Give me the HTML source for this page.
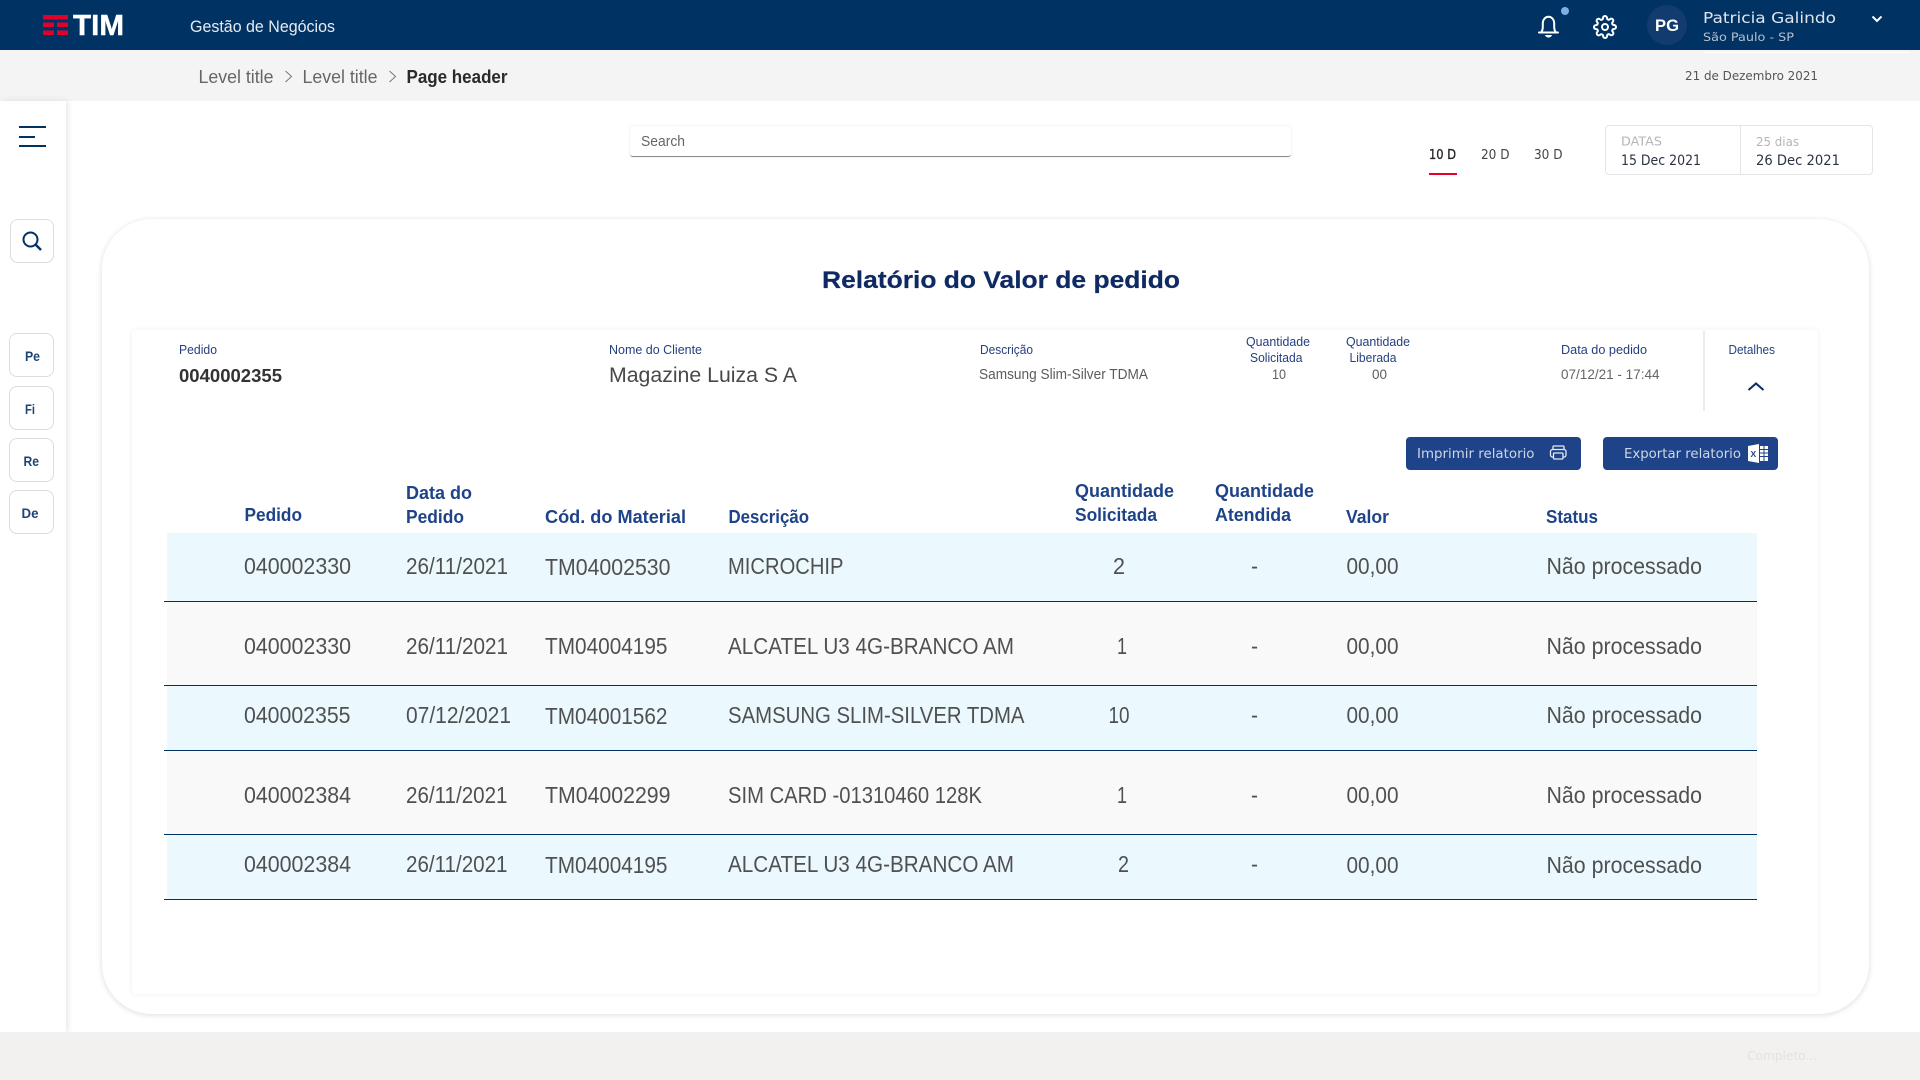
<!DOCTYPE html>
<html lang="pt-BR">
<head>
<meta charset="utf-8">
<title>Relatório do Valor de pedido</title>
<style>
html,body{margin:0;padding:0;width:1920px;height:1080px;overflow:hidden;background:#fff;font-family:"Liberation Sans",sans-serif}
.b{position:absolute;box-sizing:border-box}
svg{position:absolute;left:0;top:0}
text{font-family:"Liberation Sans",sans-serif;white-space:pre}
.td{font-size:23.5px;fill:#505050}
.th{font-size:18.5px;font-weight:700;fill:#1e4388}
.lb{font-size:13px;fill:#25407f}
.m{font-family:"DejaVu Sans",sans-serif}
</style>
</head>
<body>
<div class="b" style="left:0;top:0;width:1920px;height:50px;background:#013264"></div>
<div class="b" style="left:0;top:50px;width:1920px;height:51px;background:#f4f4f4"></div>
<div class="b" style="left:1703px;top:52px;width:207px;height:1px;background:#fff"></div>
<div class="b" style="left:0;top:101px;width:66px;height:931px;background:#fff;box-shadow:2px 0 6px rgba(0,0,0,.1)"></div>
<div class="b" style="left:0;top:1032px;width:1920px;height:48px;background:#f2f1ef"></div>

<div class="b" style="left:10px;top:219px;width:44px;height:44px;border:1px solid #ddd;border-radius:8px;background:#fff"></div>
<div class="b" style="left:9px;top:333px;width:45px;height:44px;border:1px solid #ddd;border-radius:8px;background:#fff"></div>
<div class="b" style="left:9px;top:386px;width:45px;height:44px;border:1px solid #ddd;border-radius:8px;background:#fff"></div>
<div class="b" style="left:9px;top:438px;width:45px;height:44px;border:1px solid #ddd;border-radius:8px;background:#fff"></div>
<div class="b" style="left:9px;top:490px;width:45px;height:44px;border:1px solid #ddd;border-radius:8px;background:#fff"></div>

<div class="b" style="left:630px;top:126px;width:661px;height:31px;background:#fff;border-bottom:1px solid #8a8a8a;border-radius:3px;box-shadow:0 0 2px rgba(0,0,0,.12)"></div>
<div class="b" style="left:1605px;top:125px;width:268px;height:50px;border:1px solid #e4e4e4;border-radius:4px;background:#fff"></div>
<div class="b" style="left:1740px;top:125px;width:1px;height:50px;background:#e4e4e4"></div>
<div class="b" style="left:1429px;top:173px;width:28px;height:2px;background:#e4002b"></div>

<div class="b" style="left:102px;top:219px;width:1767px;height:795px;background:#fff;border-radius:50px;box-shadow:0 1px 6px rgba(0,0,0,.14)"></div>
<div class="b" style="left:132px;top:330px;width:1686px;height:664px;background:#fff;border-radius:4px;box-shadow:0 0 6px rgba(0,0,0,.07)"></div>
<div class="b" style="left:1703px;top:331px;width:2px;height:80px;background:#ececec"></div>

<div class="b" style="left:1406px;top:437px;width:175px;height:33px;background:#1e4388;border-radius:4px"></div>
<div class="b" style="left:1603px;top:437px;width:175px;height:33px;background:#1e4388;border-radius:4px"></div>

<div class="b" style="left:167px;top:533px;width:1590px;height:68px;background:#ebf9ff"></div>
<div class="b" style="left:167px;top:601px;width:1590px;height:84px;background:#f9f9f9"></div>
<div class="b" style="left:167px;top:685px;width:1590px;height:65px;background:#ebf9ff"></div>
<div class="b" style="left:167px;top:750px;width:1590px;height:84px;background:#f9f9f9"></div>
<div class="b" style="left:167px;top:834px;width:1590px;height:65px;background:#ebf9ff"></div>
<div class="b" style="left:164px;top:601px;width:1593px;height:1px;background:#013264"></div>
<div class="b" style="left:164px;top:685px;width:1593px;height:1px;background:#013264"></div>
<div class="b" style="left:164px;top:750px;width:1593px;height:1px;background:#013264"></div>
<div class="b" style="left:164px;top:834px;width:1593px;height:1px;background:#013264"></div>
<div class="b" style="left:164px;top:899px;width:1593px;height:1px;background:#013264"></div>

<svg width="1920" height="1080" viewBox="0 0 1920 1080" xmlns="http://www.w3.org/2000/svg">
<!-- logo -->
<rect x="43" y="15" width="25" height="4.5" fill="#e4002b"/>
<rect x="43" y="22.5" width="11" height="4.5" fill="#e4002b"/><rect x="57" y="22.5" width="11" height="4.5" fill="#e4002b"/>
<rect x="43" y="30.5" width="11" height="4.5" fill="#e4002b"/><rect x="57" y="30.5" width="11" height="4.5" fill="#e4002b"/>
<text x="73" y="35" font-size="29" font-weight="700" fill="#fff" stroke="#fff" stroke-width=".4" textLength="51" lengthAdjust="spacingAndGlyphs">TIM</text>
<text x="190" y="32" font-size="16.5" fill="#e6ebf1" textLength="145" lengthAdjust="spacingAndGlyphs">Gestão de Negócios</text>

<!-- bell -->
<g fill="none" stroke="#fff" stroke-width="2" stroke-linecap="round" stroke-linejoin="round">
<path d="M1539 32.5h19M1541 32.5c1.3-1.6 1.8-3.2 1.8-5.5v-3.5c0-4 2.6-6.7 5.7-6.7s5.7 2.7 5.7 6.7V27c0 2.3.5 3.9 1.8 5.5"/>
</g>
<path d="M1545 35h7c-.4 1.5-1.9 2.5-3.5 2.5s-3.100-1-3.500-2.500z" fill="#fff"/>
<circle cx="1565" cy="11" r="4" fill="#7db1e6"/>
<!-- gear -->
<g transform="translate(1593,15)" fill="none" stroke="#fff" stroke-width="2" stroke-linecap="round" stroke-linejoin="round">
<path d="M12 15a3 3 0 1 0 0-6 3 3 0 0 0 0 6z"/>
<path d="M19.4 15a1.65 1.65 0 0 0 .33 1.82l.06.06a2 2 0 0 1 0 2.83 2 2 0 0 1-2.83 0l-.06-.06a1.65 1.65 0 0 0-1.82-.33 1.65 1.65 0 0 0-1 1.51V21a2 2 0 0 1-2 2 2 2 0 0 1-2-2v-.09A1.65 1.65 0 0 0 9 19.4a1.65 1.65 0 0 0-1.82.33l-.06.06a2 2 0 0 1-2.83 0 2 2 0 0 1 0-2.83l.06-.06a1.65 1.65 0 0 0 .33-1.82 1.65 1.65 0 0 0-1.51-1H3a2 2 0 0 1-2-2 2 2 0 0 1 2-2h.09A1.65 1.65 0 0 0 4.6 9a1.65 1.65 0 0 0-.33-1.82l-.06-.06a2 2 0 0 1 0-2.83 2 2 0 0 1 2.83 0l.06.06a1.65 1.65 0 0 0 1.82.33H9a1.65 1.65 0 0 0 1-1.51V3a2 2 0 0 1 2-2 2 2 0 0 1 2 2v.09a1.65 1.65 0 0 0 1 1.51 1.65 1.65 0 0 0 1.82-.33l.06-.06a2 2 0 0 1 2.83 0 2 2 0 0 1 0 2.83l-.06.06a1.65 1.65 0 0 0-.33 1.82V9a1.65 1.65 0 0 0 1.51 1H21a2 2 0 0 1 2 2 2 2 0 0 1-2 2h-.09a1.65 1.65 0 0 0-1.51 1z"/>
</g>
<circle cx="1667" cy="25" r="20" fill="#113c6d"/>
<text x="1655" y="31" font-size="16.5" font-weight="700" fill="#fff" textLength="24" lengthAdjust="spacingAndGlyphs">PG</text>
<text x="1703" y="23" class="m" font-size="15" fill="#dfe5ee" textLength="133" lengthAdjust="spacingAndGlyphs">Patricia Galindo</text>
<text x="1703" y="41" class="m" font-size="11.5" fill="#b4c0d0" textLength="91" lengthAdjust="spacingAndGlyphs">São Paulo - SP</text>
<path d="M1872.5 16.5l4.5 4.5 4.500-4.500" fill="none" stroke="#fff" stroke-width="2"/>

<!-- breadcrumb -->
<text x="198.500" y="83" font-size="18" fill="#666" textLength="75" lengthAdjust="spacingAndGlyphs">Level title</text>
<path d="M285.5 71l6 5.500-6 5.500" fill="none" stroke="#777" stroke-width="1"/>
<text x="302.500" y="83" font-size="18" fill="#666" textLength="75" lengthAdjust="spacingAndGlyphs">Level title</text>
<path d="M389.5 71l6 5.500-6 5.500" fill="none" stroke="#777" stroke-width="1"/>
<text x="406.500" y="83" font-size="18" font-weight="700" fill="#2a2a2a" textLength="101" lengthAdjust="spacingAndGlyphs">Page header</text>
<text x="1685" y="80" class="m" font-size="12" fill="#555" textLength="133" lengthAdjust="spacingAndGlyphs">21 de Dezembro 2021</text>

<!-- sidebar -->
<g stroke="#013264" stroke-width="2"><path d="M19 127h27M19 137h16M19 146h27"/></g>
<g fill="none" stroke="#013264" stroke-width="2"><circle cx="30.5" cy="239.5" r="7"/><path d="M35.5 244.500l5.500 5.500" stroke-width="2.400"/></g>
<g font-size="14" font-weight="700" fill="#1c4476">
<text x="25" y="361" textLength="15" lengthAdjust="spacingAndGlyphs">Pe</text>
<text x="25" y="414" textLength="10" lengthAdjust="spacingAndGlyphs">Fi</text>
<text x="23.500" y="466" textLength="15.500" lengthAdjust="spacingAndGlyphs">Re</text>
<text x="21.500" y="518" textLength="17" lengthAdjust="spacingAndGlyphs">De</text>
</g>

<!-- top controls -->
<text x="641" y="146" font-size="14.500" fill="#666" textLength="44" lengthAdjust="spacingAndGlyphs">Search</text>
<text x="1429" y="159" class="m" font-size="13" fill="#222" stroke="#222" stroke-width=".3" textLength="27" lengthAdjust="spacingAndGlyphs">10 D</text>
<text x="1481" y="159" class="m" font-size="13" fill="#444" textLength="28.500" lengthAdjust="spacingAndGlyphs">20 D</text>
<text x="1534" y="159" class="m" font-size="13" fill="#444" textLength="28.500" lengthAdjust="spacingAndGlyphs">30 D</text>
<text x="1621" y="145.500" class="m" font-size="12.500" fill="#b5b5b5" textLength="41" lengthAdjust="spacingAndGlyphs">DATAS</text>
<text x="1621" y="165" class="m" font-size="14" fill="#2c3444" textLength="80" lengthAdjust="spacingAndGlyphs">15 Dec 2021</text>
<text x="1756" y="146" class="m" font-size="12.500" fill="#b5b5b5" textLength="43" lengthAdjust="spacingAndGlyphs">25 dias</text>
<text x="1756" y="165" class="m" font-size="14" fill="#2c3444" textLength="84" lengthAdjust="spacingAndGlyphs">26 Dec 2021</text>

<!-- title -->
<text x="822" y="288" font-size="24" font-weight="700" fill="#0f2a63" stroke="#0f2a63" stroke-width=".2" textLength="358" lengthAdjust="spacingAndGlyphs">Relatório do Valor de pedido</text>

<!-- info panel -->
<text x="179" y="354" class="lb" textLength="38" lengthAdjust="spacingAndGlyphs">Pedido</text>
<text x="179" y="382" font-size="18.500" font-weight="700" fill="#333" textLength="103" lengthAdjust="spacingAndGlyphs">0040002355</text>
<text x="609" y="354" class="lb" textLength="93" lengthAdjust="spacingAndGlyphs">Nome do Cliente</text>
<text x="609" y="382" font-size="21.500" fill="#484848" textLength="188" lengthAdjust="spacingAndGlyphs">Magazine Luiza S A</text>
<text x="980" y="354" class="lb" textLength="53" lengthAdjust="spacingAndGlyphs">Descrição</text>
<text x="979" y="379" font-size="14.500" fill="#5c5c5c" textLength="169" lengthAdjust="spacingAndGlyphs">Samsung Slim-Silver TDMA</text>
<text x="1246" y="346" class="lb" textLength="64" lengthAdjust="spacingAndGlyphs">Quantidade</text>
<text x="1250" y="362" class="lb" textLength="52.500" lengthAdjust="spacingAndGlyphs">Solicitada</text>
<text x="1272" y="379" font-size="14" fill="#5c5c5c" textLength="14" lengthAdjust="spacingAndGlyphs">10</text>
<text x="1346" y="346" class="lb" textLength="64" lengthAdjust="spacingAndGlyphs">Quantidade</text>
<text x="1349.500" y="362" class="lb" textLength="47" lengthAdjust="spacingAndGlyphs">Liberada</text>
<text x="1372" y="379" font-size="14" fill="#5c5c5c" textLength="15" lengthAdjust="spacingAndGlyphs">00</text>
<text x="1561" y="354" class="lb" textLength="86" lengthAdjust="spacingAndGlyphs">Data do pedido</text>
<text x="1561" y="379" font-size="14" fill="#666" textLength="98.500" lengthAdjust="spacingAndGlyphs">07/12/21 - 17:44</text>
<text x="1728.500" y="354" class="lb" textLength="46.500" lengthAdjust="spacingAndGlyphs">Detalhes</text>
<path d="M1748.5 390l7.500-6.500 7.500 6.500" fill="none" stroke="#0f2a63" stroke-width="2"/>

<!-- buttons -->
<text x="1417" y="458" class="m" font-size="13" fill="#ccd6e6" textLength="117.500" lengthAdjust="spacingAndGlyphs">Imprimir relatorio</text>
<g fill="none" stroke="#e6ebf3" stroke-width="1.300"><path d="M1553 449.500v-2.500a1 1 0 0 1 1-1h9a1 1 0 0 1 1 1v2.500"/><rect x="1550.500" y="449.500" width="15.500" height="7.500" rx="2"/><rect x="1553.500" y="453" width="9.500" height="6" rx="1" fill="#1e4388"/></g>
<text x="1624" y="458" class="m" font-size="13" fill="#ccd6e6" textLength="117" lengthAdjust="spacingAndGlyphs">Exportar relatorio</text>
<path d="M1748 446l11-2v19l-11-2z" fill="#fff"/><rect x="1760" y="446" width="8" height="15" fill="#fff"/>
<g stroke="#1e4388" stroke-width="1"><path d="M1760 449.500h8M1760 453h8M1760 456.500h8M1764 446v15"/></g>
<text x="1750.500" y="457" font-size="8.500" font-weight="700" fill="#1e4388">X</text>

<!-- table header -->
<text x="244.500" y="521" class="th" textLength="57.500" lengthAdjust="spacingAndGlyphs">Pedido</text>
<text x="406" y="499" class="th" textLength="66" lengthAdjust="spacingAndGlyphs">Data do</text>
<text x="406" y="523" class="th" textLength="58" lengthAdjust="spacingAndGlyphs">Pedido</text>
<text x="545" y="523" class="th" textLength="141" lengthAdjust="spacingAndGlyphs">Cód. do Material</text>
<text x="728.500" y="523" class="th" textLength="80.500" lengthAdjust="spacingAndGlyphs">Descrição</text>
<text x="1075" y="497" class="th" textLength="99" lengthAdjust="spacingAndGlyphs">Quantidade</text>
<text x="1075" y="521" class="th" textLength="82" lengthAdjust="spacingAndGlyphs">Solicitada</text>
<text x="1215" y="497" class="th" textLength="99" lengthAdjust="spacingAndGlyphs">Quantidade</text>
<text x="1215" y="521" class="th" textLength="76" lengthAdjust="spacingAndGlyphs">Atendida</text>
<text x="1346" y="523" class="th" textLength="43" lengthAdjust="spacingAndGlyphs">Valor</text>
<text x="1546" y="523" class="th" textLength="52" lengthAdjust="spacingAndGlyphs">Status</text>

<!-- row 1 -->
<text x="244" y="574" class="td" textLength="107" lengthAdjust="spacingAndGlyphs">040002330</text>
<text x="406" y="574" class="td" textLength="102" lengthAdjust="spacingAndGlyphs">26/11/2021</text>
<text x="545" y="575" class="td" textLength="125.500" lengthAdjust="spacingAndGlyphs">TM04002530</text>
<text x="728" y="574" class="td" textLength="115.500" lengthAdjust="spacingAndGlyphs">MICROCHIP</text>
<text x="1113" y="574" class="td" textLength="12" lengthAdjust="spacingAndGlyphs">2</text>
<text x="1251" y="574" class="td" textLength="7" lengthAdjust="spacingAndGlyphs">-</text>
<text x="1346.500" y="574" class="td" textLength="52" lengthAdjust="spacingAndGlyphs">00,00</text>
<text x="1546.500" y="574" class="td" textLength="155.500" lengthAdjust="spacingAndGlyphs">Não processado</text>
<!-- row 2 -->
<text x="244" y="654" class="td" textLength="107" lengthAdjust="spacingAndGlyphs">040002330</text>
<text x="406" y="654" class="td" textLength="102" lengthAdjust="spacingAndGlyphs">26/11/2021</text>
<text x="545" y="654" class="td" textLength="122.500" lengthAdjust="spacingAndGlyphs">TM04004195</text>
<text x="728" y="654" class="td" textLength="286" lengthAdjust="spacingAndGlyphs">ALCATEL U3 4G-BRANCO AM</text>
<text x="1117" y="654" class="td" textLength="10" lengthAdjust="spacingAndGlyphs">1</text>
<text x="1251" y="654" class="td" textLength="7" lengthAdjust="spacingAndGlyphs">-</text>
<text x="1346.500" y="654" class="td" textLength="52" lengthAdjust="spacingAndGlyphs">00,00</text>
<text x="1546.500" y="654" class="td" textLength="155.500" lengthAdjust="spacingAndGlyphs">Não processado</text>
<!-- row 3 -->
<text x="244" y="723" class="td" textLength="106.500" lengthAdjust="spacingAndGlyphs">040002355</text>
<text x="406" y="723" class="td" textLength="105" lengthAdjust="spacingAndGlyphs">07/12/2021</text>
<text x="545" y="724" class="td" textLength="122.500" lengthAdjust="spacingAndGlyphs">TM04001562</text>
<text x="728" y="723" class="td" textLength="296.500" lengthAdjust="spacingAndGlyphs">SAMSUNG SLIM-SILVER TDMA</text>
<text x="1108.500" y="723" class="td" textLength="21" lengthAdjust="spacingAndGlyphs">10</text>
<text x="1251" y="723" class="td" textLength="7" lengthAdjust="spacingAndGlyphs">-</text>
<text x="1346.500" y="723" class="td" textLength="52" lengthAdjust="spacingAndGlyphs">00,00</text>
<text x="1546.500" y="723" class="td" textLength="155.500" lengthAdjust="spacingAndGlyphs">Não processado</text>
<!-- row 4 -->
<text x="244" y="803" class="td" textLength="107" lengthAdjust="spacingAndGlyphs">040002384</text>
<text x="406" y="803" class="td" textLength="101.500" lengthAdjust="spacingAndGlyphs">26/11/2021</text>
<text x="545" y="803" class="td" textLength="125.500" lengthAdjust="spacingAndGlyphs">TM04002299</text>
<text x="728" y="803" class="td" textLength="254" lengthAdjust="spacingAndGlyphs">SIM CARD -01310460 128K</text>
<text x="1117" y="803" class="td" textLength="10" lengthAdjust="spacingAndGlyphs">1</text>
<text x="1251" y="803" class="td" textLength="7" lengthAdjust="spacingAndGlyphs">-</text>
<text x="1346.500" y="803" class="td" textLength="52" lengthAdjust="spacingAndGlyphs">00,00</text>
<text x="1546.500" y="803" class="td" textLength="155.500" lengthAdjust="spacingAndGlyphs">Não processado</text>
<!-- row 5 -->
<text x="244" y="872" class="td" textLength="107" lengthAdjust="spacingAndGlyphs">040002384</text>
<text x="406" y="872" class="td" textLength="101.500" lengthAdjust="spacingAndGlyphs">26/11/2021</text>
<text x="545" y="873" class="td" textLength="122.500" lengthAdjust="spacingAndGlyphs">TM04004195</text>
<text x="728" y="872" class="td" textLength="286" lengthAdjust="spacingAndGlyphs">ALCATEL U3 4G-BRANCO AM</text>
<text x="1118" y="872" class="td" textLength="11" lengthAdjust="spacingAndGlyphs">2</text>
<text x="1251" y="872" class="td" textLength="7" lengthAdjust="spacingAndGlyphs">-</text>
<text x="1346.500" y="873" class="td" textLength="52" lengthAdjust="spacingAndGlyphs">00,00</text>
<text x="1546.500" y="873" class="td" textLength="155.500" lengthAdjust="spacingAndGlyphs">Não processado</text>

<text x="1747" y="1060" class="m" font-size="12.500" fill="#e3e2e0" textLength="70" lengthAdjust="spacingAndGlyphs">Completo...</text>
</svg>
</body>
</html>
